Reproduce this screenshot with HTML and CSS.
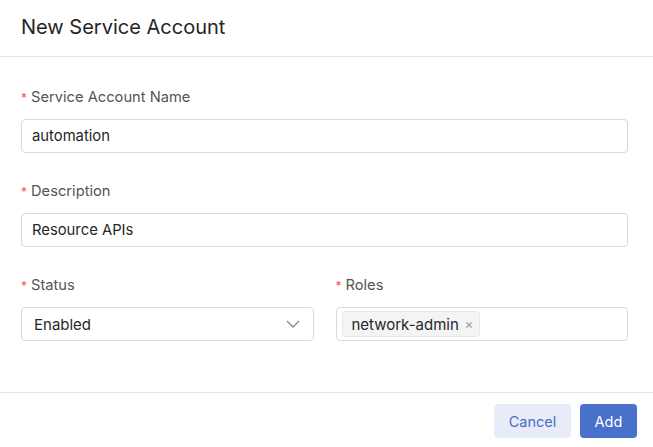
FILE: index.html
```html
<!DOCTYPE html>
<html>
<head>
<meta charset="utf-8">
<link rel="stylesheet" href="styles.css">
</head>
<body>
<div class="modal">
  <div class="modal-header">New Service Account</div>
  <div class="modal-body">
    <div class="form-item">
      <label class="label"><span class="req">*</span>Service Account Name</label>
      <div class="input">automation</div>
    </div>
    <div class="form-item">
      <label class="label"><span class="req">*</span>Description</label>
      <div class="input">Resource APIs</div>
    </div>
    <div class="form-row">
      <div class="form-item">
        <label class="label"><span class="req">*</span>Status</label>
        <div class="input select">
          <span class="select-value">Enabled</span>
          <svg class="chevron" width="14" height="8" viewBox="0 0 14 8"><path d="M1 1l6 6 6-6" fill="none" stroke="#888" stroke-width="1.3"/></svg>
        </div>
      </div>
      <div class="form-item">
        <label class="label"><span class="req">*</span>Roles</label>
        <div class="input multi">
          <span class="tag">network-admin<span class="tag-close">×</span></span>
        </div>
      </div>
    </div>
  </div>
  <div class="modal-footer">
    <button class="btn btn-cancel">Cancel</button>
    <button class="btn btn-primary">Add</button>
  </div>
</div>
</body>
</html>
```

FILE: styles.css
```css
* { box-sizing: border-box; }
html, body { margin: 0; padding: 0; background: #fff; }
body {
  font-family: "Inter", "Liberation Sans", sans-serif;
  color: #262626;
  width: 653px;
  height: 447px;
  overflow: hidden;
}
.modal { display: flex; flex-direction: column; height: 447px; }
.modal-header {
  height: 57px;
  padding: 0 21px 2px;
  display: flex;
  align-items: center;
  font-size: 20px;
  color: #262626;
  border-bottom: 1px solid #e6e6e6;
}
.modal-body {
  padding: 29px 25px 0 21px;
  flex: 1;
}
.form-item { margin-bottom: 27px; }
.form-row { display: grid; grid-template-columns: 1fr 1fr; column-gap: 22px; }
.label {
  display: block;
  height: 22px;
  line-height: 22px;
  font-size: 14.7px;
  color: #555;
  margin-bottom: 11px;
}
.req { color: #f5564a; margin-right: 4px; font-size: 12px; }
.input {
  height: 34px;
  border: 1px solid #d9d9d9;
  border-radius: 4px;
  padding: 0 10px;
  display: flex;
  align-items: center;
  font-size: 14.8px;
  color: #262626;
}
.select { justify-content: space-between; padding: 0 13px 0 12px; font-size: 15px; }
.chevron { display: block; }
.multi { padding: 0 5px; }
.tag {
  display: inline-flex;
  align-items: center;
  height: 26px;
  padding: 0 6px 0 9px;
  background: #f4f4f5;
  border: 1px solid #e6e6e6;
  border-radius: 4px;
  font-size: 15px;
  color: #262626;
}
.tag-close { color: #999; font-size: 13px; margin-left: 6px; }
.modal-footer {
  border-top: 1px solid #e6e6e6;
  padding: 11px 16px 9px;
  display: flex;
  justify-content: flex-end;
  gap: 9px;
}
.btn {
  height: 34px;
  border: none;
  border-radius: 4px;
  font-family: inherit;
  font-size: 14.5px;
  padding: 0;
}
.btn-cancel { width: 77px; background: #e8ecf8; color: #4a6cc4; }
.btn-primary { width: 57px; background: #4970cb; color: #fff; }
```
